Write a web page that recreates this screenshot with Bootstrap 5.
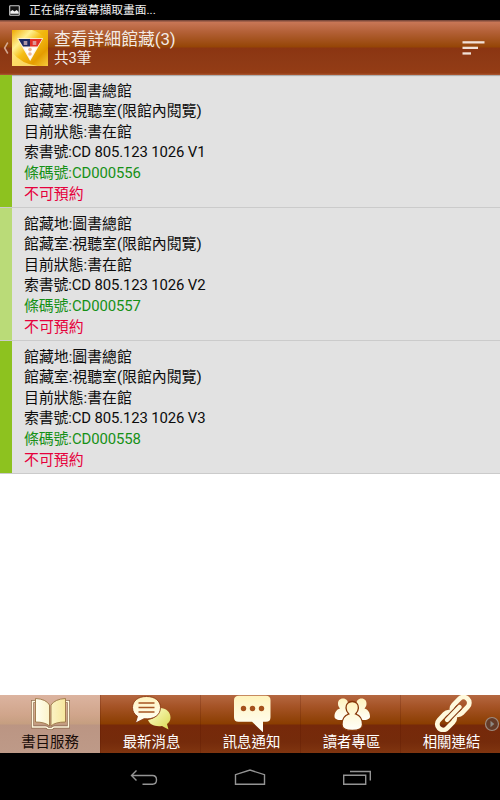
<!DOCTYPE html>
<html lang="zh-Hant">
<head>
<meta charset="utf-8">
<meta name="viewport" content="width=device-width, initial-scale=1">
<title>查看詳細館藏</title>
<link href="https://cdn.jsdelivr.net/npm/bootstrap@5.3.0/dist/css/bootstrap.min.css" rel="stylesheet">
<style>
body{font-family:Roboto,"Noto Sans CJK TC",sans-serif;background:#fff;height:800px;overflow:hidden}
.status{height:20px;background:#000;color:#f0f0f0;font-size:11.75px;line-height:20px;padding-left:9px}
.status span{margin-left:9px}
.topbar{height:55px;background:linear-gradient(#7d4a3b 0,#7d4a3b 1px,#c87757 2px,#b5623a 11px,#954506 27px,#8b3512 28px,#8f3a15 42px,#943c15 53px,#ad5a35 55px);color:#f3ebe6}
.back{width:6px;margin-left:3px;margin-right:3px}
.menu-icon{margin-right:15px}
.titles{margin-left:6px;padding-top:2px}
.title-main{font-size:16.8px;line-height:20px}
.title-sub{font-size:14.6px;line-height:19px}
.holding{height:133px;background:#e2e2e2;border-bottom:1px solid #cbcbcb;font-size:14.9px;line-height:20.6px;color:#0c0c0c}
.holding:first-child{box-shadow:inset 0 2px 1px -1px #aaa}
.call-no{letter-spacing:-.13px}
.stripe{width:12px;background:#8dc21f;margin-right:1px}
.alt-row .stripe{background:#badb78}
.fields{padding:5.600px 0 0 11px}
.code{color:#169016;letter-spacing:-.1px}
.deny{color:#e6003c}
.tabs{height:58px;background:linear-gradient(#b56841 0,#a65427 11px,#8a3d00 29px,#76290a 30px,#752b0b 47px,#803510 58px)}
.tab-item{color:#fff;font-size:14.4px;line-height:20px;border-left:1px solid rgba(80,20,0,.22)}
.tab-item svg{display:block;height:37px;width:50px}
.tab-label{padding:1px 0 0 2px}
.tab-item.current{flex:0 0 100px;background:linear-gradient(#dcb4a0 0,#d0a58b 20px,#c59e80 29px,#bb9583 30px,#be9a88 58px);color:#1a0d08;border:0}
.tab-item.current .tab-label{padding-left:0}
.more-dot{right:0;bottom:21px}
.sysnav{height:47px;background:#000;padding-top:1px}
</style>
<script src="https://cdn.jsdelivr.net/npm/bootstrap@5.3.0/dist/js/bootstrap.bundle.min.js"></script>
</head>
<body class="d-flex flex-column">
<div class="status d-flex align-items-center flex-shrink-0">
<svg width="11" height="11" viewBox="0 0 11 11"><rect x=".7" y=".7" width="9.6" height="9.6" rx=".6" fill="#111" stroke="#ccc" stroke-width="1.1"/><path d="M1.3 8.8V6.5L3.5 5l2 1.6L7.7 5l2 2v1.8z" fill="#eee"/></svg>
<span>正在儲存螢幕擷取畫面...</span>
</div>
<header class="topbar d-flex align-items-center flex-shrink-0">
<svg class="back" height="14" viewBox="0 0 6 14"><path d="M4.800 1.500L1.600 7l3.200 5.500" fill="none" stroke="#d3a891" stroke-width="1.500"/></svg>
<svg width="36" height="36" viewBox="0 0 36 36">
<defs><linearGradient id="gold" x1="0" y1="0" x2="1" y2="1"><stop offset="0" stop-color="#efa900"/><stop offset=".28" stop-color="#fff091"/><stop offset=".48" stop-color="#f5bd14"/><stop offset=".75" stop-color="#e59d00"/><stop offset="1" stop-color="#f6cb3d"/></linearGradient></defs>
<rect width="36" height="36" fill="url(#gold)"/>
<path d="M0 36V22Q9 34 26 36z" fill="#ffe681" opacity=".75"/><path d="M20 0Q35 4 36 18V0z" fill="#f0b008" opacity=".6"/>
<path d="M5.200 8.200h26L18.200 31z" fill="#fff4e8"/>
<path d="M6.500 9H18v7.600h-7z" fill="#1d2861"/><path d="M18 9h12l-4.500 7.600H18z" fill="#e22f26"/>
<path d="M11.700 11h3.600v4h-3.600zM20.700 11h3.600v4h-3.600z" fill="#dcb9be" opacity=".75"/>
<path d="M12.400 18h11.500l-5.700 11z" fill="#fff"/><circle cx="18" cy="19.600" r="1.800" fill="#efb796"/><circle cx="18" cy="24" r="1.800" fill="#efb796"/>
</svg>
<div class="titles"><div class="title-main">查看詳細館藏(3)</div><div class="title-sub">共3筆</div></div>
<svg class="menu-icon ms-auto" width="23" height="16" viewBox="0 0 23 16"><g fill="#f2e1d7"><path d="M.5 1.200h22v2.300H.5z"/><path d="M.5 6.700h15.500V9H.5z"/><path d="M.5 12.300h8.500v2.300H.5z"/></g></svg>
</header>
<main class="flex-grow-1">
<section class="holding d-flex"><div class="stripe"></div><div class="fields"><div>館藏地:圖書總館</div><div>館藏室:視聽室(限館內閱覽)</div><div>目前狀態:書在館</div><div class="call-no">索書號:CD 805.123 1026 V1</div><div class="code">條碼號:CD000556</div><div class="deny">不可預約</div></div></section>
<section class="holding alt-row d-flex"><div class="stripe"></div><div class="fields"><div>館藏地:圖書總館</div><div>館藏室:視聽室(限館內閱覽)</div><div>目前狀態:書在館</div><div class="call-no">索書號:CD 805.123 1026 V2</div><div class="code">條碼號:CD000557</div><div class="deny">不可預約</div></div></section>
<section class="holding d-flex"><div class="stripe"></div><div class="fields"><div>館藏地:圖書總館</div><div>館藏室:視聽室(限館內閱覽)</div><div>目前狀態:書在館</div><div class="call-no">索書號:CD 805.123 1026 V3</div><div class="code">條碼號:CD000558</div><div class="deny">不可預約</div></div></section>
</main>
<nav class="tabs d-flex flex-shrink-0 position-relative">
<svg width="0" height="0" class="position-absolute"><defs><linearGradient id="cream" x1="0" y1="0" x2="0" y2="1"><stop offset="0" stop-color="#fff3bd"/><stop offset="1" stop-color="#fffffa"/></linearGradient><linearGradient id="lime" x1="0" y1="0" x2="1" y2="1"><stop offset="0" stop-color="#ffffd0"/><stop offset="1" stop-color="#d9d84e"/></linearGradient><linearGradient id="leaf"><stop offset="0" stop-color="#fffef0"/><stop offset="1" stop-color="#f7e79d"/></linearGradient></defs></svg>
<div class="tab-item current col d-flex flex-column align-items-center">
<svg viewBox="0 0 50 37"><path d="M10.500 6.500H7.500V32h13q2 0 2.500 1.500h4q.5-1.500 2.500-1.500h14V6.500h-3" fill="none" stroke="#8c684c" stroke-width="2.800"/><path d="M10.500 6.500H7.500V32h13q2 0 2.500 1.500h4q.5-1.500 2.500-1.500h14V6.500h-3" fill="none" stroke="#fff8de" stroke-width="1.500"/><path d="M10.500 3.500Q21 4 24.500 10v21Q20 27 10.500 27zM40.500 3.500Q30 4 26 10v21q4-4 14.500-4z" fill="url(#leaf)" stroke="#9b7544" stroke-width=".9"/></svg>
<div class="tab-label">書目服務</div></div>
<div class="tab-item col d-flex flex-column align-items-center">
<svg viewBox="0 0 50 37"><path d="M34 13c6 0 10.500 4 10.500 9.500 0 3-1.300 5-3.500 6.500l1.500 5.500-6.500-3.500c-7 1-12.500-1.500-14-6 6-1 12-5 12-12z" fill="url(#lime)"/><path d="M20.500 1.500C12 1.500 6.500 6 6.500 12.500c0 4 2 7 5 8.800L9.500 28l8.500-4.300c10 1 16.500-3.500 16.500-11.200 0-6.500-5.500-11-14-11z" fill="url(#cream)" stroke="#812f08" stroke-width=".8"/><path d="M12.500 8h16M12.500 12.500h16M12.500 17h16" stroke="#a75623" stroke-width="1.500"/></svg>
<div class="tab-label">最新消息</div></div>
<div class="tab-item col d-flex flex-column align-items-center">
<svg viewBox="0 0 50 37"><path d="M13 .8h27q4.500 0 4.500 4.500v17q0 4.500-4.500 4.500h-3v10.500L26 26.800H12.500Q8 26.800 8 22.300V5.300Q8 .8 13 .8z" fill="url(#cream)"/><g fill="#a5501b"><circle cx="17.500" cy="13.500" r="2.700"/><circle cx="26.500" cy="13.500" r="2.700"/><circle cx="35.500" cy="13.500" r="2.700"/></g></svg>
<div class="tab-label">訊息通知</div></div>
<div class="tab-item col d-flex flex-column align-items-center">
<svg viewBox="0 0 50 37"><path d="M17 3.500c3.200 0 5.200 2.300 5 5.500-.1 2-1 3.300-2 4.500l3 3-5 8.500c-5 .5-9.500-.5-9.500-3.500 0-4 2-7 5.500-8-1-1.200-1.900-2.500-2-4.500-.2-3.200 1.800-5.500 5-5.500zM35.500 3.500c-3.200 0-5.200 2.300-5 5.500.1 2 1 3.300 2 4.500l-3 3 5 8.500c5 .5 9.500-.5 9.500-3.500 0-4-2-7-5.500-8 1-1.200 1.900-2.500 2-4.500.2-3.200-1.800-5.500-5-5.500z" fill="url(#cream)"/><path d="M26.200 6.500c4 0 6.400 2.800 6.200 6.500-.1 2.500-1.300 4.500-2.800 6 4 1.300 6.900 5 6.900 10.500 0 4-4.500 6-10.300 6S16 33.500 16 29.500C16 24 18.800 20.300 22.800 19c-1.500-1.500-2.700-3.500-2.800-6-.2-3.700 2.200-6.500 6.200-6.500z" fill="url(#cream)" stroke="#873607" stroke-width="1.300"/></svg>
<div class="tab-label">讀者專區</div></div>
<div class="tab-item col d-flex flex-column align-items-center">
<svg viewBox="0 0 50 37"><g transform="translate(27.300 18.500) rotate(-46)" fill="none" stroke="#fff9dc" stroke-width="4.800"><rect x="-20.500" y="-5.800" width="20" height="11.600" rx="5.800"/><rect x=".5" y="-5.800" width="20" height="11.600" rx="5.800"/><path d="M-9 0H9" stroke="#81350b" stroke-width="6.400"/><path d="M-9 0H9" stroke-width="4.400" stroke-linecap="round"/></g></svg>
<div class="tab-label">相關連結</div></div>
<svg class="more-dot position-absolute" width="16" height="16" viewBox="0 0 16 16"><circle cx="8" cy="8" r="6.500" fill="#653b27" stroke="#9d8a7f" stroke-width="1.200"/><path d="M6.500 4.800L10.300 8l-3.800 3.200z" fill="#8d8984"/></svg>
</nav>
<footer class="sysnav d-flex flex-shrink-0 justify-content-center">
<svg width="242" height="46" viewBox="129 754 242 46" fill="none" stroke="#949494" stroke-width="1.400"><path d="M136.500 770.500l-5 5 5 5M132 775.500h20.500q4 0 4 4.200 0 4.500-4 4.500h-10M235.500 784.200v-9.500l14.500-4.600 14.500 4.600v9.500zM343.700 775.200h22v9h-22zM350 771.500h20.300v9"/></svg>
</footer>
</body>
</html>
